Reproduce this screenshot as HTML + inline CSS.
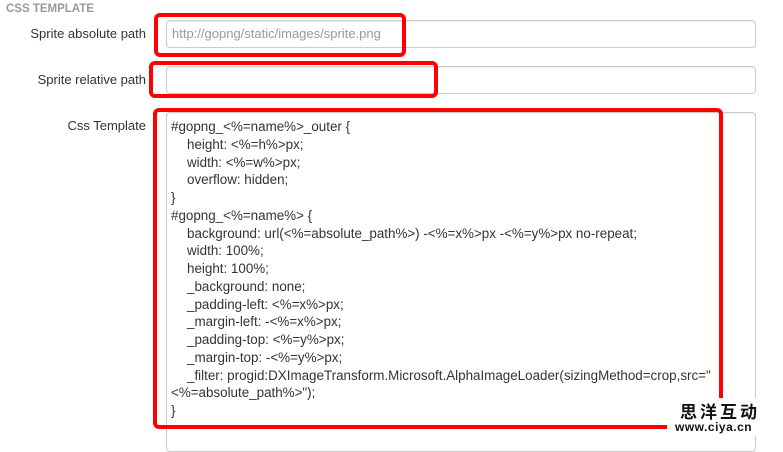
<!DOCTYPE html>
<html><head><meta charset="utf-8"><style>
body{margin:0;width:783px;height:441px;overflow:hidden;background:#fff;font-family:"Liberation Sans",Arial,sans-serif;position:relative}
.a{position:absolute}
.h{left:6px;top:3px;font-size:11.5px;font-weight:bold;color:#999}
.lab{font-size:13px;color:#333;text-align:right;width:140px;left:6px}
.inp{border:1px solid #ccc;border-radius:4px;background:#fff;box-sizing:border-box;box-shadow:inset 0 1px 1px rgba(0,0,0,.075)}
.red{border:4px solid #f00;border-radius:6px;box-sizing:border-box}
.code{left:171px;top:118px;font-size:13.4px;color:#333}
.code div{height:17.75px;line-height:17.75px;white-space:nowrap}
.code .i{padding-left:16px}
</style></head><body>
<div class="a h">CSS TEMPLATE</div>
<div class="a lab" style="top:26px">Sprite absolute path</div>
<div class="a lab" style="top:72px">Sprite relative path</div>
<div class="a lab" style="top:118px">Css Template</div>
<div class="a inp" style="left:166px;top:20px;width:590px;height:28px"></div>
<div class="a" style="left:172px;top:26px;font-size:13px;color:#999">http://gopng/static/images/sprite.png</div>
<div class="a inp" style="left:166px;top:66px;width:590px;height:28px"></div>
<div class="a inp" style="left:166px;top:112px;width:590px;height:340px"></div>
<div class="a code">
<div>#gopng_&lt;%=name%&gt;_outer {</div>
<div class="i">height: &lt;%=h%&gt;px;</div>
<div class="i">width: &lt;%=w%&gt;px;</div>
<div class="i">overflow: hidden;</div>
<div>}</div>
<div>#gopng_&lt;%=name%&gt; {</div>
<div class="i">background: url(&lt;%=absolute_path%&gt;) -&lt;%=x%&gt;px -&lt;%=y%&gt;px no-repeat;</div>
<div class="i">width: 100%;</div>
<div class="i">height: 100%;</div>
<div class="i">_background: none;</div>
<div class="i">_padding-left: &lt;%=x%&gt;px;</div>
<div class="i">_margin-left: -&lt;%=x%&gt;px;</div>
<div class="i">_padding-top: &lt;%=y%&gt;px;</div>
<div class="i">_margin-top: -&lt;%=y%&gt;px;</div>
<div class="i">_filter: progid:DXImageTransform.Microsoft.AlphaImageLoader(sizingMethod=crop,src="</div>
<div>&lt;%=absolute_path%&gt;");</div>
<div>}</div>
</div>
<div class="a red" style="left:154px;top:13px;width:252px;height:44px"></div>
<div class="a red" style="left:149px;top:61px;width:289px;height:37px"></div>
<div class="a red" style="left:153px;top:108px;width:570px;height:321px"></div>
<div class="a" style="left:667px;top:398px;width:110px;height:38px;background:#fff"></div>
<div class="a" style="left:680px;top:401px;font-family:'Noto Sans CJK SC',sans-serif;font-size:17px;font-weight:bold;letter-spacing:3px;color:#111;line-height:20px">思洋互动</div>
<div class="a" style="left:675px;top:420px;font-size:12px;font-weight:bold;color:#111;letter-spacing:0.5px">www.ciya.cn</div>
</body></html>
